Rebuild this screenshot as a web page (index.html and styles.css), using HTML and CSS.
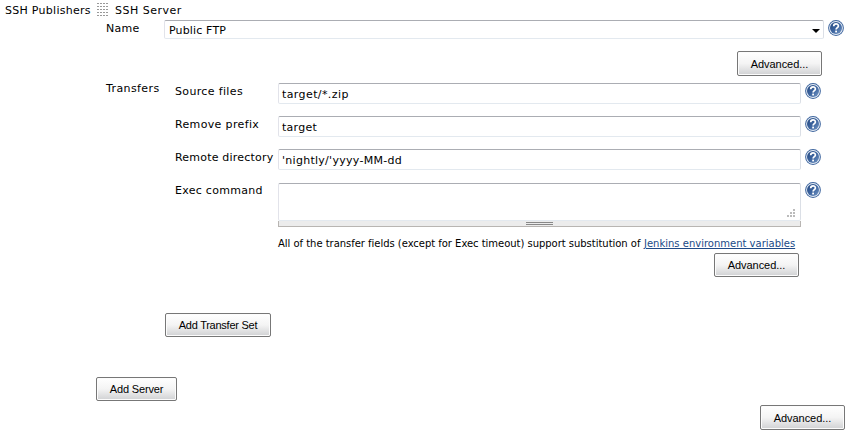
FILE: index.html
```html
<!DOCTYPE html>
<html lang="en">
<head>
<meta charset="utf-8">
<title>SSH Publishers</title>
<link rel="stylesheet" href="styles.css">
</head>
<body>
<svg class="defs" width="0" height="0" aria-hidden="true">
  <defs>
    <linearGradient id="blue" x1="0" y1="0" x2="1" y2="1"><stop offset="0" stop-color="#23477f"/><stop offset=".5" stop-color="#3c649f"/><stop offset="1" stop-color="#7597c4"/></linearGradient>
    <symbol id="help" viewBox="0 0 16 16">
      <circle cx="8" cy="8" r="7.9" fill="#3e659e"/>
      <circle cx="8" cy="8" r="6.9" fill="#e8eef6"/>
      <circle cx="8" cy="8" r="6" fill="url(#blue)"/>
      <path d="M5.7 6.2C5.7 3 10.4 3.1 10.4 5.9C10.4 7.6 8.1 7.6 8.1 9.5" fill="none" stroke="#fff" stroke-width="1.7"/>
      <rect x="7.2" y="10.6" width="1.8" height="1.8" fill="#fff"/>
    </symbol>
  </defs>
</svg>
<main class="form">
  <header class="head"><span class="publishers">SSH Publishers</span><i class="grip"></i><span class="server">SSH Server</span></header>
  <section class="row name-row">
    <label class="label">Name</label>
    <div class="field select"><span class="public">Public FTP</span><svg width="8" height="4" viewBox="0 0 8 4"><path d="M0 0H8L4 4Z"/></svg></div>
    <svg class="help"><use href="#help"/></svg>
  </section>
  <div class="actions top"><button class="advanced"><span>Advanced...</span></button></div>
  <section class="row transfers">
    <label class="label">Transfers</label>
    <div class="set">
      <div class="entry"><label class="source">Source files</label><div class="field"><span class="zip">target/*.zip</span></div><svg class="help"><use href="#help"/></svg></div>
      <div class="entry"><label class="prefix">Remove prefix</label><div class="field"><span class="target">target</span></div><svg class="help"><use href="#help"/></svg></div>
      <div class="entry"><label class="remote">Remote directory</label><div class="field"><span class="nightly">'nightly/'yyyy-MM-dd</span></div><svg class="help"><use href="#help"/></svg></div>
      <div class="entry exec"><label class="command">Exec command</label>
        <div class="area"><div class="field"><svg class="corner" width="8" height="8" viewBox="0 0 8 8"><path d="M6 0h2v2H6zM3 3h2v2H3zM6 3h2v2H6zM0 6h2v2H0zM3 6h2v2H3zM6 6h2v2H6z"/></svg></div><div class="handle"><i></i></div></div>
        <svg class="help"><use href="#help"/></svg></div>
      <p class="note"><span class="note-text">All of the transfer fields (except for Exec timeout) support substitution of</span><a href="#">Jenkins environment variables</a></p>
      <div class="actions inner"><button class="advanced"><span>Advanced...</span></button></div>
    </div>
  </section>
  <button class="add-set"><span>Add Transfer Set</span></button>
  <button class="add-server"><span>Add Server</span></button>
  <div class="actions bottom"><button class="advanced"><span>Advanced...</span></button></div>
</main>
</body>
</html>
```
FILE: styles.css
```css
* { box-sizing: border-box; }
body { margin: 0; background: #fff; color: #000; font: 11px/16px "DejaVu Sans", Verdana, sans-serif; letter-spacing: .28px; }
.defs { position: absolute; }
.form { width: 850px; height: 433px; overflow: hidden; display: flex; flex-direction: column; align-items: flex-start; }
span, label, a { white-space: nowrap; }
.head { display: flex; height: 20px; padding: 3px 0 0 5px; }
.publishers { width: 91px; }
.grip { width: 12px; height: 15px; background: conic-gradient(from 90deg at 1px 1px, transparent 75%, #999 0) 0 0 / 3px 3px; }
.server { margin-left: 7px; letter-spacing: .5px; }
.row { display: flex; padding-left: 106px; }
.label { width: 58px; flex: none; padding-top: 1px; }
.field { border: 1px solid; border-color: #abadb3 #dbdfe6 #e3e9ef #e2e3ea; border-radius: 2px; background: #fff; }
.select { width: 660px; height: 19px; padding: 2px 3px 0 4px; display: flex; justify-content: space-between; line-height: 15px; letter-spacing: .15px; }
.select svg { margin-top: 6px; }
.help { width: 16px; height: 16px; flex: none; margin-left: 4px; }
.actions { display: flex; justify-content: flex-end; }
button { height: 25px; flex: none; border: 1px solid #777; border-radius: 2px; box-shadow: inset 0 0 0 1px #fcfcfc; background: linear-gradient(#fff, #f4f4f4 50%, #d0d1d3); color: #000; padding: 0; text-align: center; font: 11px/22px "Liberation Sans", Arial, sans-serif; letter-spacing: -.05px; }
.advanced { width: 85px; }
.top { width: 822px; margin-top: 12px; }
.transfers { margin-top: 7px; }
.transfers > .label { margin-top: -3px; width: 69px; letter-spacing: .4px; }
.entry { display: flex; height: 33px; }
.entry label { width: 103px; flex: none; padding-top: 1px; }
.source, .prefix { letter-spacing: .35px; }
.remote { letter-spacing: .2px; }
.zip { letter-spacing: .4px; }
.entry .field { width: 523px; height: 21px; padding: 3px 3px 0; line-height: 15px; }
.entry .area .field { height: 38px; display: flex; align-items: flex-end; justify-content: flex-end; padding: 0 5px 3px 0; }
.exec { height: 52px; }
.corner path { fill: #bbb; }
.handle { height: 6px; background: #ececec; border: 1px solid #b8b5b2; border-top: 0; display: flex; justify-content: center; }
.handle i { width: 27px; height: 3px; margin-top: 1px; border: solid #888; border-width: 1px 0; }
.exec .area { padding-top: 1px; }
.note { display: flex; width: 523px; height: 16px; margin: 2px 0 0 103px; font-size: 10px; letter-spacing: 0; }
.note-text { width: 366px; letter-spacing: -.03px; }
.note a { color: #204a87; }
.inner { width: 624px; margin-top: 1px; }
.inner button { height: 24px; }
.add-set { width: 106px; height: 24px; margin: 36px 0 0 165px; letter-spacing: -.25px; }
.add-server { width: 81px; height: 24px; margin: 40px 0 0 96px; letter-spacing: -.15px; }
.bottom { width: 845px; margin-top: 4px; }
```
